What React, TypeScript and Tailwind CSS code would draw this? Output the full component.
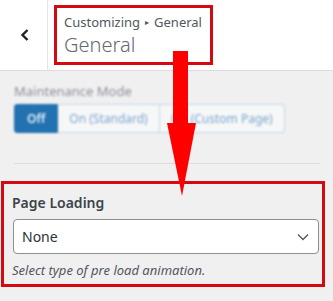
const font = { fontFamily: '"Noto Sans", "Open Sans", sans-serif' };

const modes = ["Off", "On (Standard)", "On (Custom Page)"];

const App = () => {
  return (
    <div
      className="relative w-[333px] h-[301px] overflow-hidden bg-[#f0f0f1] flex"
      style={font}
    >
      {/* left edge of the window */}
      <div className="w-[2px] flex flex-col">
        <div className="h-[160px] bg-[#111]"></div>
        <div className="flex-1 bg-[#e6e6e6]"></div>
      </div>

      <div className="flex-1 flex flex-col">
        {/* Header */}
        <div className="h-[71px] flex bg-white border-b border-[#dcdcde]">
          <div className="w-[48px] border-r border-[#e5e5e5] flex items-center justify-center pl-[2px]">
            <svg width="10" height="14" viewBox="0 0 10 14">
              <polyline
                points="7.5,2 2.5,7 7.5,12"
                fill="none"
                stroke="#1d2327"
                strokeWidth="2.4"
              />
            </svg>
          </div>
          <div className="pt-[5px] pl-[6px]">
            <div className="w-[159px] h-[60px] border-[3px] border-[#d40a10] pl-[7px] pt-[5px]">
              <div className="text-[13px] leading-[18px] text-[#50575e] flex items-center">
                Customizing
                <span className="text-[8px] mx-[5px]">▸</span>
                General
              </div>
              <div className="text-[20px] leading-[26px] font-light text-[#646970] mt-[1px]">
                General
              </div>
            </div>
          </div>
        </div>

        {/* Body */}
        <div className="flex-1 px-[14px]">
          <div className="blur-[1px] pt-[11px]">
            <div className="text-[13px] leading-[18px] text-[#8a8f94]">
              Maintenance Mode
            </div>
            <div className="flex mt-[4px] h-[29px] text-[12px]">
              {modes.map((m, i) => (
                <div
                  key={m}
                  className={
                    i === 0
                      ? "px-[12px] flex items-center bg-[#2271b1] text-[#e8f0f8] font-semibold border border-[#2271b1] rounded-l-[3px]"
                      : "px-[11px] flex items-center bg-[#f6f7f7] text-[#7aa6d0] border border-l-0 border-[#c3d6e8] last:rounded-r-[3px]"
                  }
                >
                  {m}
                </div>
              ))}
            </div>
          </div>
          <div className="mt-[30px] mr-[5px] border-t border-[#dcdcde]"></div>

          {/* Page Loading */}
          <div className="mt-[17px] -ml-[13px] w-[324px] h-[106px] border-[3px] border-[#d40a10] pl-[8px] pr-[3px] pt-[9px]">
            <div className="text-[14px] leading-[20px] font-semibold text-[#3c434a]">
              Page Loading
            </div>
            <div className="mt-[6px] ml-[1px] h-[35px] bg-white border border-[#8c8f94] rounded-[4px] flex items-center justify-between pl-[8px] pr-[9px]">
              <span className="text-[14px] text-[#2c3338]">None</span>
              <svg width="12" height="8" viewBox="0 0 12 8">
                <polyline
                  points="1,1.5 6,6.5 11,1.5"
                  fill="none"
                  stroke="#50575e"
                  strokeWidth="1.3"
                />
              </svg>
            </div>
            <div className="mt-[7px] text-[13px] leading-[18px] italic text-[#50575e]">
              Select type of pre load animation.
            </div>
          </div>
        </div>
      </div>

      {/* annotation arrow */}
      <svg
        className="absolute left-[165px] top-[50px]"
        width="34"
        height="147"
        viewBox="0 0 34 147"
      >
        <rect x="8" y="1" width="15" height="73" fill="#ff0000" />
        <polygon points="2,73 31,73 17,146" fill="#ff0000" />
      </svg>
    </div>
  );
};

export default App;
